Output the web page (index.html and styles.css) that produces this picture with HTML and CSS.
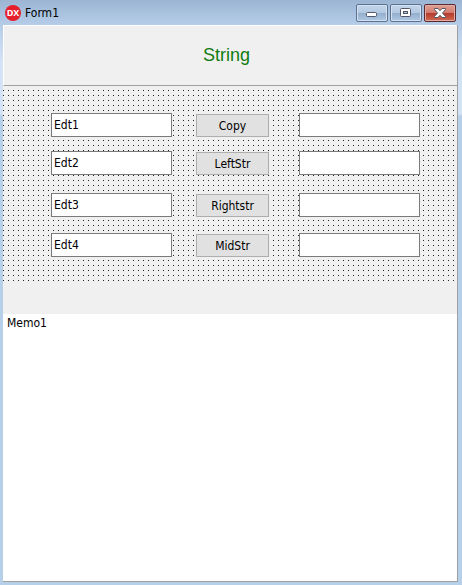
FILE: index.html
```html
<!DOCTYPE html>
<html lang="en">
  <head>
    <meta charset="UTF-8" />
    <title>Form1</title>
    <link rel="stylesheet" href="styles.css">
  </head>
  <body>
    <div class="window">
      <header class="titlebar">
        <svg class="logo" viewBox="0 0 16 16" aria-hidden="true">
          <circle cx="8" cy="8" r="8" fill="#e5202b" />
          <text x="8" y="11" text-anchor="middle">DX</text>
        </svg>
        <span class="caption">Form1</span>
        <div class="controls">
          <button class="control" type="button" aria-label="Minimize">
            <svg viewBox="0 0 30 16">
              <rect x="9.5" y="7.5" width="10" height="4" rx="1" fill="#fff" stroke="#535666" />
            </svg>
          </button>
          <button class="control" type="button" aria-label="Maximize">
            <svg viewBox="0 0 30 16">
              <rect x="9.5" y="3.5" width="10" height="8" rx="1" fill="#fff" stroke="#535666" />
              <rect x="12.5" y="6.5" width="4" height="2" fill="#a9c0da" stroke="#535666" />
            </svg>
          </button>
          <button class="control close" type="button" aria-label="Close">
            <svg viewBox="0 0 30 16">
              <path d="M9.5 3.5H13l2 2.200 2-2.200h3.500v1l-3 3.500 3 3.500v1H17l-2-2.200-2 2.200H9.500v-1l3-3.500-3-3.500z" fill="#fff" stroke="#535666" />
            </svg>
          </button>
        </div>
      </header>

      <main class="client">
        <div class="panel">
          <h1>String</h1>
        </div>

        <form class="designer">
          <input type="text" value="Edt1" aria-label="Edt1" />
          <button class="btn" type="button">Copy</button>
          <input class="result" type="text" aria-label="Copy result" />

          <input type="text" value="Edt2" aria-label="Edt2" />
          <button class="btn" type="button">LeftStr</button>
          <input class="result" type="text" aria-label="LeftStr result" />

          <input type="text" value="Edt3" aria-label="Edt3" />
          <button class="btn" type="button">Rightstr</button>
          <input class="result" type="text" aria-label="Rightstr result" />

          <input type="text" value="Edt4" aria-label="Edt4" />
          <button class="btn" type="button">MidStr</button>
          <input class="result" type="text" aria-label="MidStr result" />
        </form>

        <div class="strip"></div>
        <textarea class="memo" aria-label="Memo1">Memo1</textarea>
      </main>
    </div>
  </body>
</html>
```

FILE: styles.css
```css
* {
  box-sizing: border-box;
}

body {
  margin: 0;
  font-family: "DejaVu Sans Condensed", Tahoma, sans-serif;
  font-size: 12px;
  color: #000;
}

.window {
  display: flex;
  flex-direction: column;
  min-height: 100vh;
  padding: 0 4px 3px 3px;
  background: linear-gradient(#9bb5d3, #b5cde8 25px, #d3e2f4 60px, #d3e2f4 114px, #b7d0ea 116px);
}

.titlebar {
  display: flex;
  align-items: center;
  height: 25px;
  padding: 0 2px;
}

.logo {
  width: 16px;
  height: 16px;
}

.logo text {
  font-family: "Open Sans", sans-serif;
  font-size: 9px;
  font-weight: bold;
  fill: #fff;
}

.caption {
  flex: 1;
  margin-left: 4px;
}

.controls {
  display: flex;
  gap: 2px;
}

.control {
  width: 32px;
  height: 18px;
  padding: 0;
  border: 1px solid #5d7290;
  border-radius: 2px;
  background: linear-gradient(#c3d5e9, #b3c9e2 50%, #93adcc 50%, #aec8e4);
  box-shadow: inset 0 0 0 1px #d3e1f0;
}

.control svg {
  display: block;
  width: 30px;
  height: 16px;
}

.close {
  border-color: #5a2a33;
  background: linear-gradient(#e0a094, #d17a6c 50%, #b5382a 50%, #cf6a50);
  box-shadow: inset 0 0 0 1px #e3aca2;
}

.client {
  flex: 1;
  display: flex;
  flex-direction: column;
  border-right: 1px solid #a0a0a0;
  border-bottom: 1px solid #a0a0a0;
  background: #f0f0f0;
}

.panel {
  display: flex;
  align-items: center;
  justify-content: center;
  height: 61px;
  padding-right: 8px;
  border-top: 1px solid #fff;
  border-left: 1px solid #fff;
  border-bottom: 1px solid #a0a0a0;
}

h1 {
  margin: 0;
  font-family: "Liberation Sans", Arial, sans-serif;
  font-size: 18px;
  font-weight: normal;
  color: #107c10;
}

/* one dot every 5px, made by crossing two line patterns */
.designer {
  display: grid;
  grid-template-columns: 145px 73px 1fr;
  grid-template-rows: 38px 42px 40px 24px;
  align-items: start;
  padding: 27px 37px 25px 48px;
  background:
    repeating-linear-gradient(90deg, transparent 0 1px, #f0f0f0 1px 5px),
    repeating-linear-gradient(#f0f0f0 0 4px, #222 4px 5px);
}

.designer input {
  width: 121px;
  height: 24px;
  padding: 0 2px;
  border: 1px solid #7a7a7a;
  background: #fff;
  font: inherit;
}

.designer .result {
  justify-self: end;
}

.btn {
  height: 23px;
  margin: 1px 0 0;
  padding: 0;
  border: 1px solid #adadad;
  background: #e1e1e1;
  font: inherit;
}

.strip {
  height: 32px;
}

.memo {
  flex: 1;
  padding: 2px 4px;
  border: none;
  background: #fff;
  font: inherit;
  resize: none;
}
```
